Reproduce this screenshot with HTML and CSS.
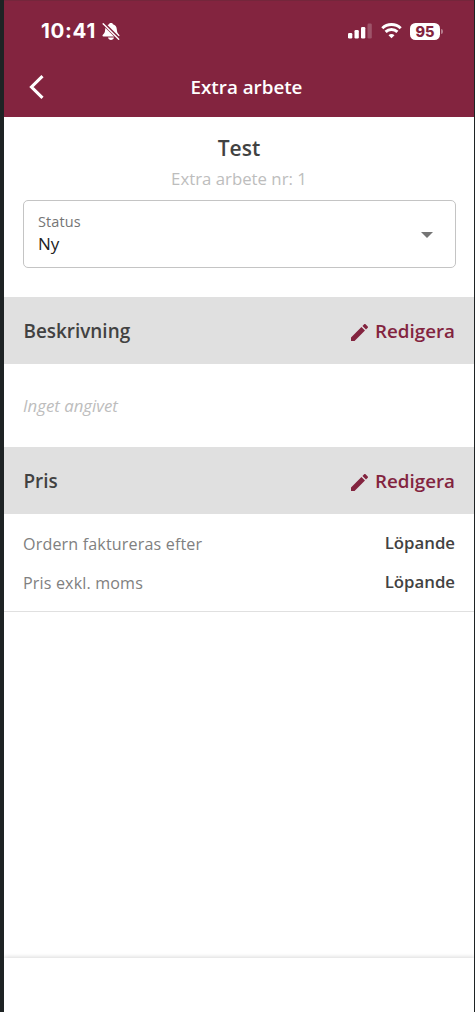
FILE: index.html
```html
<!DOCTYPE html>
<html lang="sv">
<head>
<meta charset="utf-8">
<title>Extra arbete</title>
<link rel="stylesheet" href="styles.css">
</head>
<body>
<div class="screen">
  <header class="header">
    <div class="statusbar">
      <span class="time">10:41</span>
      <svg class="bell" width="18" height="19" viewBox="0 0 18 19">
        <path d="M9 1C7.800 1 7.200 1.500 7.100 2.200C4.700 2.900 3.300 4.800 3.200 7.300C3.100 10.500 2.200 11.500 .9 12.700C.2 13.400 .4 14.500 1.500 14.500H16.500C17.600 14.500 17.800 13.400 17.100 12.700C15.800 11.500 14.900 10.500 14.800 7.300C14.700 4.800 13.300 2.900 10.900 2.200C10.800 1.500 10.200 1 9 1ZM6 15.600C6.300 17.100 7.500 18 9 18S11.700 17.100 12 15.600Z" fill="#fff"/>
        <path d="M.8 .8L17.800 17.800" stroke="#83243f" stroke-width="3.400"/>
        <path d="M1.200 1.700L16.700 17.200" stroke="#fff" stroke-width="1.400" stroke-linecap="round"/>
      </svg>
      <div class="indicators">
        <svg class="signal" width="24" height="16" viewBox="0 0 24 16" fill="#fff">
          <rect x="0" y="10" width="4.300" height="5.500" rx="1.200"/>
          <rect x="6.500" y="7" width="4.300" height="8.500" rx="1.200"/>
          <rect x="13" y="4" width="4.300" height="11.500" rx="1.200"/>
          <rect x="19.500" y="0.500" width="4.300" height="15" rx="1.200" opacity=".22"/>
        </svg>
        <svg class="wifi" width="21" height="16" viewBox="0 0 21 16" fill="none" stroke="#fff" stroke-width="2.900">
          <path d="M1.300 5.300C6.400 .3 14.600 .3 19.700 5.300"/>
          <path d="M4.600 8.900C7.900 5.700 13.100 5.700 16.400 8.900"/>
          <path d="M7.500 12.200C9.200 10.500 11.800 10.500 13.500 12.200L10.500 15.200Z" fill="#fff" stroke="none"/>
        </svg>
        <div class="battery"><span class="level">95</span></div>
      </div>
    </div>
    <div class="titlebar">
      <svg class="back" width="16" height="24" viewBox="0 0 16 24"><path d="M13.500 1.200L2.500 12L13.500 22.800" fill="none" stroke="#fff" stroke-width="3.100"/></svg>
      <h1 class="title">Extra arbete</h1>
    </div>
  </header>
  <main class="content">
    <h2 class="name">Test</h2>
    <p class="number">Extra arbete nr: 1</p>
    <div class="select">
      <div class="field"><span class="label">Status</span><span class="value">Ny</span></div>
      <svg class="caret" width="12" height="6" viewBox="0 0 12 6"><path d="M0 0H12L6 6Z" fill="#757575"/></svg>
    </div>
    <section>
      <div class="bar">
        <h3 class="heading">Beskrivning</h3>
        <a class="edit"><svg class="pencil" width="17" height="17" viewBox="3 3 18 18"><path fill="#83243f" d="M3 17.250V21h3.750L17.810 9.940l-3.750-3.750L3 17.250zM20.710 7.040c.39-.39.39-1.020 0-1.410l-2.340-2.340c-.39-.39-1.020-.39-1.410 0l-1.830 1.830 3.750 3.750 1.830-1.830z"/></svg><span class="edit-text">Redigera</span></a>
      </div>
      <p class="empty">Inget angivet</p>
    </section>
    <section>
      <div class="bar">
        <h3 class="heading">Pris</h3>
        <a class="edit"><svg class="pencil" width="17" height="17" viewBox="3 3 18 18"><path fill="#83243f" d="M3 17.250V21h3.750L17.810 9.940l-3.750-3.750L3 17.250zM20.710 7.040c.39-.39.39-1.020 0-1.410l-2.340-2.340c-.39-.39-1.020-.39-1.410 0l-1.830 1.830 3.750 3.750 1.830-1.830z"/></svg><span class="edit-text">Redigera</span></a>
      </div>
      <dl class="rows">
        <div class="row"><dt class="key">Ordern faktureras efter</dt><dd class="amount">Löpande</dd></div>
        <div class="row"><dt class="key">Pris exkl. moms</dt><dd class="amount">Löpande</dd></div>
      </dl>
    </section>
  </main>
  <footer class="footer"></footer>
</div>
</body>
</html>
```
FILE: styles.css
```css
* { box-sizing: border-box; margin: 0; padding: 0; }
body { background: #1e2324; font-family: "Open Sans", "Noto Sans", sans-serif; color: #424242; }
.screen { width: 470px; height: 1012px; margin-left: 4px; background: #fff; display: flex; flex-direction: column; overflow: hidden; }
.header { height: 117px; flex: none; background: #83243f; border-top: 1px solid #74263b; color: #fff; }
.statusbar { height: 60px; display: flex; align-items: center; padding: 0 34px 0 37px; }
.time { font: 750 20.500px/24px Inter, sans-serif; letter-spacing: .7px; width: 61px; white-space: nowrap; }
.indicators { margin-left: auto; display: flex; align-items: center; }
.wifi { margin: 0 8px 0 9px; }
.battery { position: relative; width: 30px; height: 17px; border-radius: 5.500px; background: #fff; display: flex; align-items: center; justify-content: center; }
.battery::after { content: ""; position: absolute; left: 31px; top: 6px; width: 2px; height: 5px; border-radius: 0 2px 2px 0; background: #b57b8c; }
.level { font: 800 14.500px/17px Inter, sans-serif; color: #83243f; }
.titlebar { height: 52px; display: grid; grid-template-columns: 60px 1fr 45px; align-items: center; }
.back { margin-left: 25px; }
.title { font-size: 18.800px; line-height: 26px; font-weight: 600; text-align: center; white-space: nowrap; }
.content { flex: 1; }
.name { margin-top: 16px; font-size: 21px; line-height: 30px; font-weight: 600; text-align: center; }
.number { margin-top: 4px; font-size: 16.800px; line-height: 24px; text-align: center; color: #bdbdbd; }
.select { margin: 9px 18.500px 29px 19px; height: 68px; border: 1.500px solid #c4c4c4; border-radius: 5px; padding: 0 22px 2px 14px; display: flex; align-items: center; justify-content: space-between; }
.field { display: flex; flex-direction: column; }
.caret { margin-top: 4px; }
.label { font-size: 14.500px; line-height: 21px; color: #757575; letter-spacing: .1px; }
.value { font-size: 17px; line-height: 24px; color: #212121; }
.bar { height: 67px; background: #e0e0e0; display: flex; align-items: center; justify-content: space-between; padding: 0 19px; }
.heading { font-size: 18.900px; line-height: 28px; font-weight: 600; padding-left: .5px; }
.edit { display: flex; align-items: center; gap: 7px; color: #83243f; }
.pencil { margin-top: 3px; }
.edit-text { font-size: 18.800px; line-height: 28px; font-weight: 600; }
.empty { height: 83px; padding-left: 19px; font-size: 16.800px; line-height: 83px; font-style: italic; color: #bdbdbd; }
.rows { height: 98px; padding: 11px 19px 0; border-bottom: 1.500px solid #e0e0e0; }
.row { height: 38.500px; display: flex; align-items: center; justify-content: space-between; }
.key { font-size: 16.100px; line-height: 24px; color: #808080; letter-spacing: .15px; }
.amount { font-size: 16.800px; line-height: 24px; font-weight: 600; padding-bottom: 2px; }
.footer { flex: none; height: 54px; background: #fff; box-shadow: 0 -1px 4px rgba(0, 0, 0, .15); }
```
